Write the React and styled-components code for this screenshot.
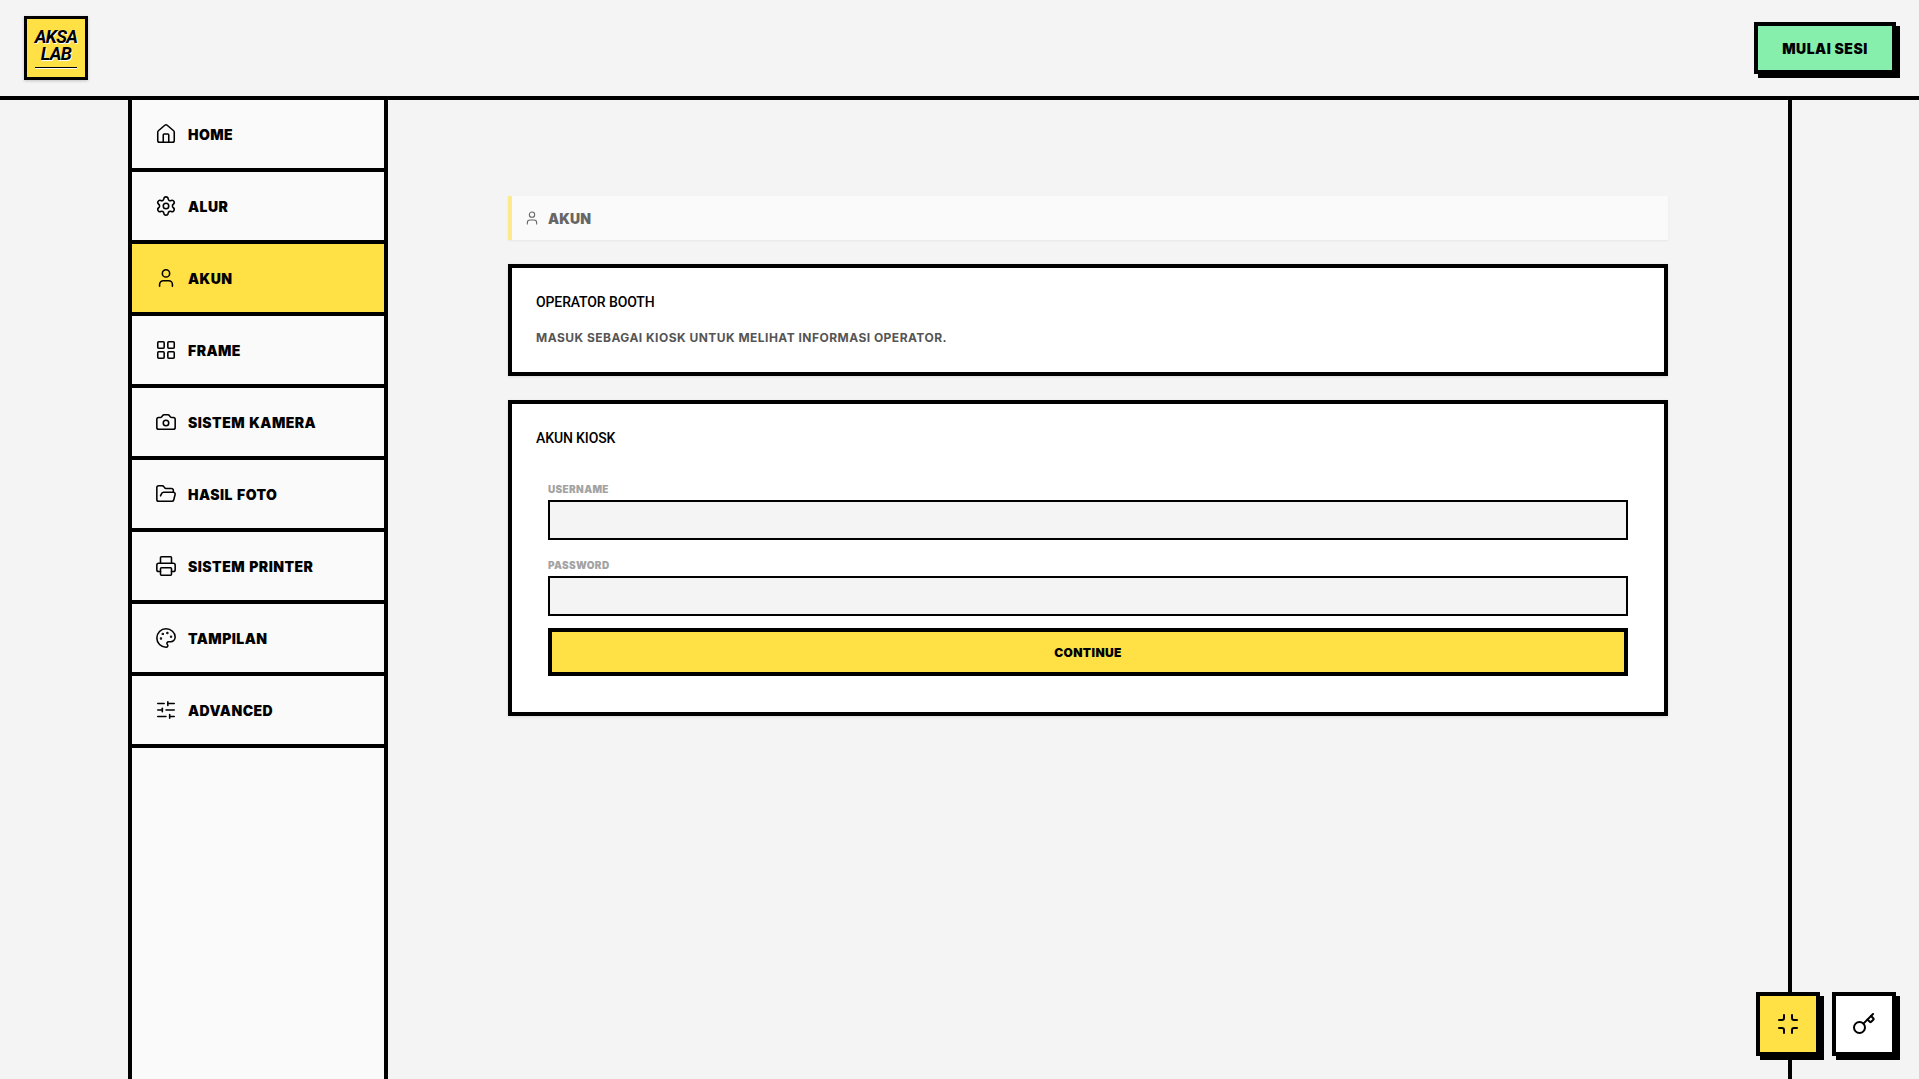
import React from 'react';
import styled, { createGlobalStyle } from 'styled-components';
import {
  House,
  Settings,
  User,
  LayoutGrid,
  Camera,
  FolderOpen,
  Printer,
  Palette,
  SlidersHorizontal,
  Minimize,
  Key,
} from 'lucide-react';

const GlobalStyle = createGlobalStyle`
  html, body {
    margin: 0;
    height: 100%;
    overflow: hidden;
    background: #f4f4f4;
    font-family: "Inter", "Liberation Sans", sans-serif;
  }
  #root {
    height: 100%;
  }
  * {
    box-sizing: border-box;
  }
`;

const Page = styled.div`
  height: 100vh;
  display: flex;
  flex-direction: column;
  position: relative;
`;

const Header = styled.header`
  height: 100px;
  flex-shrink: 0;
  border-bottom: 4px solid #000;
  padding: 16px 23px 0 24px;
  display: flex;
  justify-content: space-between;
  align-items: flex-start;
`;

const Logo = styled.div`
  width: 64px;
  height: 64px;
  border: 3px solid #000;
  background: #ffe045;
  box-shadow: 0 1px 3px rgba(0, 0, 0, 0.2);
  display: flex;
  flex-direction: column;
  align-items: center;
  padding-top: 10px;
`;

const LogoText = styled.div`
  font-family: "Roboto", sans-serif;
  font-style: italic;
  font-weight: 700;
  font-size: 18px;
  line-height: 16.5px;
  letter-spacing: -0.7px;
  text-align: center;
  color: #000;
  text-shadow: 1px 1px 0 #fff;
`;

const LogoRule = styled.div`
  width: 42px;
  height: 1px;
  margin-top: 5px;
  background: #000;
  box-shadow: 0 1px 0 #fff;
`;

const StartButton = styled.button`
  width: 142px;
  height: 52px;
  margin-top: 6px;
  border: 4px solid #000;
  background: #86efac;
  box-shadow: 4px 4px 0 #000;
  font-family: "Inter", sans-serif;
  font-weight: 900;
  font-size: 14px;
  letter-spacing: 0.5px;
  color: #000;
  padding: 0;
`;

const Shell = styled.div`
  flex: 1;
  min-height: 0;
  display: flex;
  padding-left: 128px;
`;

const Sidebar = styled.nav`
  width: 260px;
  flex-shrink: 0;
  border-left: 4px solid #000;
  border-right: 4px solid #000;
  background: #fafafa;
`;

const NavItem = styled.div`
  height: 72px;
  border-bottom: 4px solid #000;
  padding-left: 23px;
  display: flex;
  align-items: center;
  gap: 11px;
  background: ${({ $active }) => ($active ? '#ffe045' : 'transparent')};
  font-weight: 900;
  font-size: 14px;
  letter-spacing: 0.45px;
  word-spacing: 1px;
  color: #000;
`;

const Main = styled.main`
  width: 1404px;
  flex-shrink: 0;
  border-right: 4px solid #000;
  padding: 96px 120px 0;
  display: flex;
  flex-direction: column;
  gap: 24px;
`;

const TitleBar = styled.div`
  height: 44px;
  border-left: 4px solid rgba(255, 224, 69, 0.6);
  background: #fafafa;
  box-shadow: 0 1px 2px rgba(0, 0, 0, 0.06);
  padding-left: 12px;
  display: flex;
  align-items: center;
  gap: 8px;
  font-weight: 900;
  font-size: 14px;
  letter-spacing: 0.1px;
  color: #666;
`;

const Card = styled.section`
  border: 4px solid #000;
  background: #fff;
  padding: 24px;
  box-shadow: 0 1px 3px rgba(0, 0, 0, 0.1);
`;

const CardTitle = styled.h2`
  margin: 0;
  font-family: "Roboto", sans-serif;
  font-weight: 500;
  font-size: 14px;
  line-height: 20px;
  letter-spacing: -0.12px;
  color: #000;
`;

const CardText = styled.p`
  margin: 16px 0 1px;
  font-weight: 700;
  font-size: 12px;
  line-height: 19px;
  letter-spacing: 0.47px;
  color: #555;
`;

const Form = styled.form`
  margin-top: 22px;
  padding: 12px;
  display: flex;
  flex-direction: column;
`;

const Field = styled.div`
  display: flex;
  flex-direction: column;
  gap: 4px;
  margin-bottom: ${({ $last }) => ($last ? '12px' : '18px')};
`;

const Label = styled.label`
  font-weight: 900;
  font-size: 10px;
  line-height: 14px;
  letter-spacing: 0.35px;
  color: #a3a3a3;
`;

const Input = styled.input`
  height: 40px;
  border: 2px solid #000;
  background: #f4f4f4;
  outline: 0;
  border-radius: 0;
`;

const Continue = styled.button`
  height: 48px;
  border: 4px solid #000;
  background: #ffe045;
  font-family: "Inter", sans-serif;
  font-weight: 900;
  font-size: 12px;
  letter-spacing: 0.4px;
  color: #000;
`;

const FloatingButtons = styled.div`
  position: absolute;
  right: 23px;
  bottom: 23px;
  display: flex;
  gap: 12px;
`;

const SquareButton = styled.button`
  width: 64px;
  height: 64px;
  border: 4px solid #000;
  background: ${({ $yellow }) => ($yellow ? '#ffe045' : '#fff')};
  box-shadow: 4px 4px 0 #000;
  display: flex;
  align-items: center;
  justify-content: center;
  padding: 0;
  color: #000;
`;

const navItems = [
  { label: 'HOME', icon: House },
  { label: 'ALUR', icon: Settings },
  { label: 'AKUN', icon: User, active: true },
  { label: 'FRAME', icon: LayoutGrid },
  { label: 'SISTEM KAMERA', icon: Camera },
  { label: 'HASIL FOTO', icon: FolderOpen },
  { label: 'SISTEM PRINTER', icon: Printer },
  { label: 'TAMPILAN', icon: Palette },
  { label: 'ADVANCED', icon: SlidersHorizontal },
];

const App = () => (
  <Page>
    <GlobalStyle />
    <Header>
      <Logo>
        <LogoText>AKSA<br />LAB</LogoText>
        <LogoRule />
      </Logo>
      <StartButton>MULAI SESI</StartButton>
    </Header>
    <Shell>
      <Sidebar>
        {navItems.map(({ label, icon: Icon, active }) => (
          <NavItem key={label} $active={active}>
            <Icon size={22} strokeWidth={1.7} />
            {label}
          </NavItem>
        ))}
      </Sidebar>
      <Main>
        <TitleBar>
          <User size={16} strokeWidth={1.6} />
          AKUN
        </TitleBar>
        <Card>
          <CardTitle>OPERATOR BOOTH</CardTitle>
          <CardText>MASUK SEBAGAI KIOSK UNTUK MELIHAT INFORMASI OPERATOR.</CardText>
        </Card>
        <Card>
          <CardTitle>AKUN KIOSK</CardTitle>
          <Form>
            <Field>
              <Label>USERNAME</Label>
              <Input />
            </Field>
            <Field $last>
              <Label>PASSWORD</Label>
              <Input type="password" />
            </Field>
            <Continue type="button">CONTINUE</Continue>
          </Form>
        </Card>
      </Main>
    </Shell>
    <FloatingButtons>
      <SquareButton $yellow><Minimize size={24} strokeWidth={2} /></SquareButton>
      <SquareButton><Key size={24} strokeWidth={2} /></SquareButton>
    </FloatingButtons>
  </Page>
);

export default App;
